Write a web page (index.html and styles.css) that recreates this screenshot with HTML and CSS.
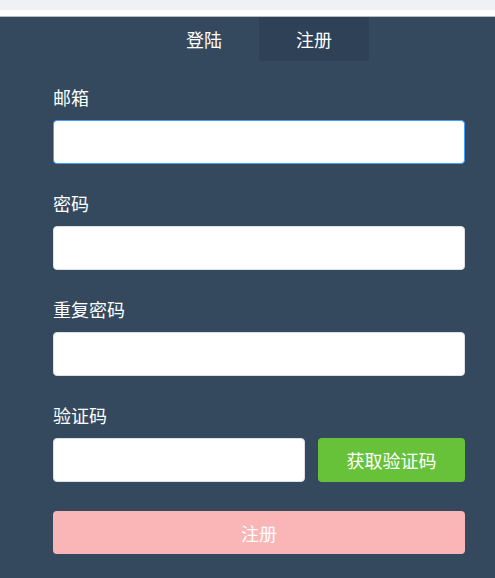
FILE: index.html
```html
<!DOCTYPE html>
<html lang="zh">
<head>
<meta charset="utf-8">
<title>注册</title>
<link rel="stylesheet" href="styles.css">
</head>
<body>
<div class="topbar"><div class="topbar-gray"></div><div class="topbar-white"></div></div>
<main class="panel">
  <nav class="tabs">
    <div class="tab">登陆</div>
    <div class="tab tab-active">注册</div>
  </nav>
  <form class="form">
    <div class="form-item">
      <label class="label">邮箱</label>
      <input class="input is-focus" type="text">
    </div>
    <div class="form-item">
      <label class="label">密码</label>
      <input class="input" type="password">
    </div>
    <div class="form-item">
      <label class="label">重复密码</label>
      <input class="input" type="password">
    </div>
    <div class="form-item">
      <label class="label">验证码</label>
      <div class="code-row">
        <input class="input code-input" type="text">
        <button type="button" class="btn btn-green">获取验证码</button>
      </div>
    </div>
    <button type="button" class="btn btn-submit">注册</button>
  </form>
</main>
</body>
</html>
```
FILE: styles.css
```css
* { box-sizing: border-box; }
html, body {
  margin: 0;
  padding: 0;
  height: 100%;
}
body {
  font-family: "Noto Sans CJK SC", "Microsoft YaHei", sans-serif;
  background: #34495e;
  display: flex;
  flex-direction: column;
}
.topbar {
  flex: none;
  border-bottom: 1px solid #b8bcc2;
}
.topbar-gray {
  height: 10px;
  background: #f0f1f4;
}
.topbar-white {
  height: 6px;
  background: #ffffff;
}
.panel {
  flex: 1;
  background: #34495e;
}
.tabs {
  display: flex;
  padding-left: 149px;
  height: 44px;
}
.tab {
  width: 110px;
  height: 44px;
  display: flex;
  align-items: center;
  justify-content: center;
  color: #ffffff;
  font-size: 18px;
  border-radius: 0 0 3px 3px;
}
.tab-active {
  background: #2e4156;
}
.form {
  padding: 24px 30px 0 53px;
  display: flex;
  flex-direction: column;
}
.form-item {
  display: flex;
  flex-direction: column;
  margin-bottom: 27px;
}
.label {
  color: #ffffff;
  font-size: 18px;
  line-height: 24px;
  margin-bottom: 11px;
}
.input {
  width: 100%;
  height: 44px;
  border: 1px solid #dcdfe6;
  border-radius: 4px;
  background: #ffffff;
  outline: none;
  padding: 0 15px;
  font-size: 14px;
}
.input.is-focus {
  border-color: #409eff;
}
.code-row {
  display: flex;
  gap: 13px;
}
.code-input {
  width: 252px;
  flex: none;
}
.btn {
  border: none;
  border-radius: 4px;
  height: 44px;
  color: #ffffff;
  font-family: inherit;
  font-size: 18px;
  padding: 0;
}
.btn-green {
  flex: 1;
  background: #67c23a;
}
.btn-submit {
  width: 100%;
  margin-top: 2px;
  background: #fab6b6;
  height: 43px;
}
```
